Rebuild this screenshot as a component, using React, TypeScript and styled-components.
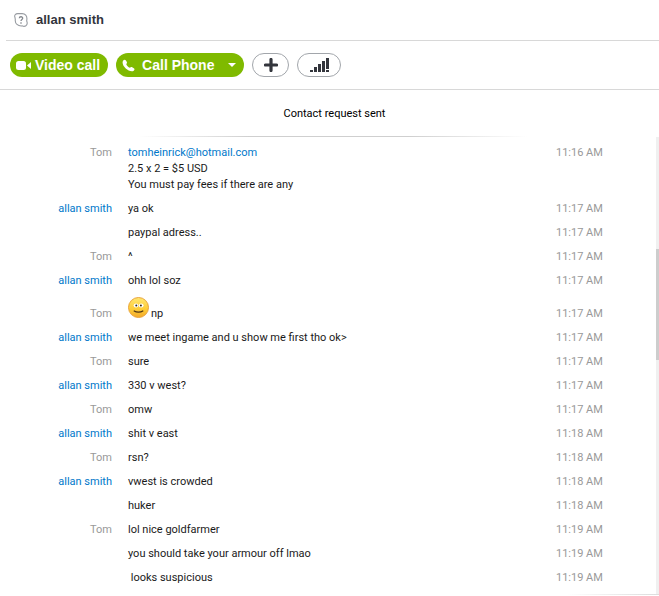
import React from "react";
import styled, { createGlobalStyle } from "styled-components";

const GlobalStyle = createGlobalStyle`
  *, *::before, *::after { box-sizing: border-box; }
  body {
    margin: 0;
    background: #ffffff;
    color: #1a1a1a;
    font-family: Roboto, "Noto Sans", sans-serif;
    font-size: 11px;
    line-height: 16px;
  }
  #root { display: flex; flex-direction: column; min-height: 100vh; }
`;

const UI_FONT = `"Liberation Sans", Arial, sans-serif`;

const Header = styled.header`
  display: flex;
  align-items: center;
  gap: 8px;
  height: 41px;
  margin-left: 6px;
  padding-left: 8px;
  border-bottom: 1px solid #d8d8d8;
`;

const ContactName = styled.h1`
  margin: 0;
  font: bold 13px/16px ${UI_FONT};
  color: #33353c;
`;

const Toolbar = styled.div`
  display: flex;
  align-items: center;
  gap: 8px;
  height: 49px;
  padding-left: 10px;
  border-bottom: 1px solid #d8d8d8;
`;

const CallButton = styled.button`
  display: flex;
  align-items: center;
  height: 24px;
  padding: 0 8px 0 6px;
  gap: 4px;
  border: 0;
  border-radius: 12px;
  background: #7fba00;
  color: #ffffff;
  font: bold 14px/16px ${UI_FONT};
  white-space: nowrap;
`;

const PhoneButton = styled(CallButton)`
  gap: 7px;
`;

const CaretIcon = styled.svg`
  margin-left: 7px;
`;

const RoundButton = styled.button<{ $width: number }>`
  display: flex;
  align-items: center;
  justify-content: center;
  width: ${(p) => p.$width}px;
  height: 24px;
  padding: 0;
  border: 1px solid #a2a6ab;
  border-radius: 12px;
  background: #ffffff;
`;

const Notice = styled.div`
  padding: 16px 0 14px 10px;
  text-align: center;
  color: #000000;
`;

const Divider = styled.div`
  height: 1px;
  background: linear-gradient(to right, transparent 21%, #cfcfcf 38%, #cfcfcf 62%, transparent 80%);
`;

const Conversation = styled.main`
  display: flex;
`;

const MessageList = styled.ol`
  flex: 1;
  margin: 0;
  padding: 4px 52px 4px 0;
  list-style: none;
`;

const MessageRow = styled.li`
  display: grid;
  grid-template-columns: 112px minmax(0, 1fr) 48px;
  column-gap: 16px;
  align-items: baseline;
  padding: 4px 0;
`;

const Sender = styled.span<{ $contact: boolean }>`
  text-align: right;
  color: ${(p) => (p.$contact ? "#0078ca" : "#999999")};
`;

const Body = styled.div`
  white-space: pre-wrap;
`;

const Link = styled.a`
  color: #0078ca;
  text-decoration: none;
`;

const Time = styled.time`
  color: #999999;
  white-space: nowrap;
`;

const SmileyIcon = styled.svg`
  display: inline-block;
  margin-right: 2px;
  vertical-align: -1px;
`;

const ScrollTrack = styled.div`
  display: flex;
  flex-direction: column;
  width: 3px;
  background: #f0f0f0;
`;

const ScrollSpace = styled.div<{ $grow: number }>`
  flex: ${(p) => p.$grow} 1 0;
`;

const ScrollThumb = styled(ScrollSpace)`
  background: #cdcdcd;
`;

const BottomEdge = styled.div`
  height: 1px;
  background: linear-gradient(to right, transparent 86%, #dcdcdc 100%);
`;

const ContactIcon = () => (
  <svg width="14" height="14" viewBox="0 0 14 14" fill="none" aria-hidden="true">
    <path
      d="M1 4.600C0 2.400 1.600.6 3.700.6h4.500c3 0 4.900 2.400 4.700 5.400l-.2 2c1.300 2.800-.2 5.400-2.700 5.400-.9 0-1.300-.3-2-.5C4 13.200.8 10.800 1.300 6.500Z"
      stroke="#979ba1"
      strokeWidth="1.100"
    />
    <path d="M5.300 5.200c.1-2 3.500-1.900 3.400.1C8.600 6.500 7 6.500 7 8M7 9.300v1.400" stroke="#84888e" strokeWidth="1.300" />
  </svg>
);

const VideoIcon = () => (
  <svg width="15" height="9" viewBox="0 0 15 9" fill="#ffffff" aria-hidden="true">
    <rect width="10" height="9" rx="2.500" />
    <path d="M11 4.500 15 1v7Z" />
  </svg>
);

const PhoneIcon = () => (
  <svg width="13" height="13" viewBox="0 0 13 13" fill="#ffffff" aria-hidden="true">
    <path d="M1 1.700C2 .4 3.200.3 3.900 1.400l.8 1.400c.6 1 .2 1.500-.5 2.200.5 1.600 2 3.100 3.700 3.800.8-.8 1.400-1 2.300-.5l1.600.9c1 .6.9 1.800-.1 2.600C8 14.500-1.500 7 1 1.700Z" />
  </svg>
);

const PlusIcon = () => (
  <svg width="14" height="14" viewBox="0 0 14 14" aria-hidden="true">
    <path d="M7 1.500v11M1.500 7h11" stroke="#33353c" strokeWidth="3.200" strokeLinecap="round" />
  </svg>
);

const SignalIcon = () => (
  <svg width="19" height="14" viewBox="0 0 19 14" fill="#33353c" aria-hidden="true">
    <path d="M0 12h3v2H0zM4 9h3v5H4zM8 6h3v8H8zM12 3h3v11h-3zM16 0h3v11h-3zM16 12h3v2h-3z" />
  </svg>
);

const Smiley = () => (
  <SmileyIcon width="21" height="21" viewBox="0 0 21 21" role="img" aria-label="smile">
    <defs>
      <linearGradient id="face" x1="0" y1="0" x2="0" y2="1">
        <stop offset="0" stopColor="#ffe772" />
        <stop offset="0.600" stopColor="#fdcb35" />
        <stop offset="1" stopColor="#f3a82a" />
      </linearGradient>
    </defs>
    <circle cx="10.500" cy="10.500" r="10" fill="url(#face)" stroke="#e9a43a" strokeWidth="1" />
    <ellipse cx="8" cy="8.500" rx="2.400" ry="2" fill="#ffffff" />
    <ellipse cx="13.200" cy="8.500" rx="2.400" ry="2" fill="#ffffff" />
    <circle cx="8.300" cy="8.500" r="1" fill="#33291c" />
    <circle cx="12.900" cy="8.500" r="1" fill="#33291c" />
    <path d="M6.200 14c2.300 1.500 6.300 1.500 8.600 0" fill="none" stroke="#4f3514" strokeWidth="1.300" strokeLinecap="round" />
  </SmileyIcon>
);

type Message = { from?: "Tom" | "allan smith"; body: React.ReactNode; time: string };

const messages: Message[] = [
  {
    from: "Tom",
    body: (
      <>
        <Link href="mailto:tomheinrick@hotmail.com">tomheinrick@hotmail.com</Link>
        {"\n2.5 x 2 = $5 USD\nYou must pay fees if there are any"}
      </>
    ),
    time: "11:16 AM",
  },
  { from: "allan smith", body: "ya ok", time: "11:17 AM" },
  { body: "paypal adress..", time: "11:17 AM" },
  { from: "Tom", body: "^", time: "11:17 AM" },
  { from: "allan smith", body: "ohh lol soz", time: "11:17 AM" },
  { from: "Tom", body: <><Smiley />np</>, time: "11:17 AM" },
  { from: "allan smith", body: "we meet ingame and u show me first tho ok>", time: "11:17 AM" },
  { from: "Tom", body: "sure", time: "11:17 AM" },
  { from: "allan smith", body: "330 v west?", time: "11:17 AM" },
  { from: "Tom", body: "omw", time: "11:17 AM" },
  { from: "allan smith", body: "shit v east", time: "11:18 AM" },
  { from: "Tom", body: "rsn?", time: "11:18 AM" },
  { from: "allan smith", body: "vwest is crowded", time: "11:18 AM" },
  { body: "huker", time: "11:18 AM" },
  { from: "Tom", body: "lol nice goldfarmer", time: "11:19 AM" },
  { body: "you should take your armour off lmao", time: "11:19 AM" },
  { body: " looks suspicious", time: "11:19 AM" },
];

export default function App() {
  return (
    <>
      <GlobalStyle />
      <Header>
        <ContactIcon />
        <ContactName>allan smith</ContactName>
      </Header>
      <Toolbar>
        <CallButton type="button">
          <VideoIcon />
          Video call
        </CallButton>
        <PhoneButton type="button">
          <PhoneIcon />
          Call Phone
          <CaretIcon width="8" height="4" viewBox="0 0 8 4" fill="#ffffff" aria-hidden="true">
            <path d="M0 0h8L4 4Z" />
          </CaretIcon>
        </PhoneButton>
        <RoundButton type="button" $width={37} aria-label="Add">
          <PlusIcon />
        </RoundButton>
        <RoundButton type="button" $width={44} aria-label="Call quality">
          <SignalIcon />
        </RoundButton>
      </Toolbar>
      <Notice>Contact request sent</Notice>
      <Divider />
      <Conversation>
        <MessageList>
          {messages.map((message, index) => (
            <MessageRow key={index}>
              <Sender $contact={message.from === "allan smith"}>{message.from}</Sender>
              <Body>{message.body}</Body>
              <Time>{message.time}</Time>
            </MessageRow>
          ))}
        </MessageList>
        <ScrollTrack aria-hidden="true">
          <ScrollSpace $grow={112} />
          <ScrollThumb $grow={111} />
          <ScrollSpace $grow={234} />
        </ScrollTrack>
      </Conversation>
      <BottomEdge />
    </>
  );
}
